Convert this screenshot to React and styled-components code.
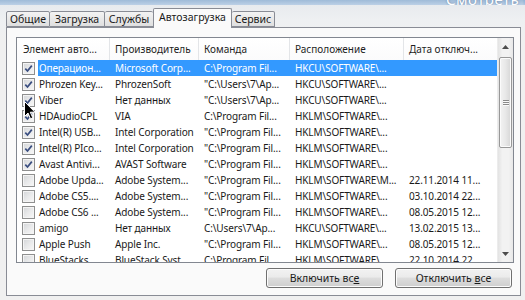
import React from "react";
import styled, { createGlobalStyle } from "styled-components";

const Global = createGlobalStyle`
  html, body { margin: 0; padding: 0; background: #f0f0f0; }
  body { font-family: "Noto Sans", "Open Sans", sans-serif; font-size: 10px; color: #1a1a1a; }
  * { box-sizing: border-box; }
`;

const Window = styled.div`
  position: relative;
  width: 525px;
  height: 300px;
  overflow: hidden;
  display: flex;
  flex-direction: column;
  background: linear-gradient(#e6e9ed 0px, #eef0f2 20px, #f0f0f0 40px);
`;

const TitleStrip = styled.div`
  height: 5px;
  flex: none;
  display: flex;
  align-items: flex-end;
  overflow: hidden;
  padding-left: 446px;
  background: linear-gradient(#9fbbd8, #bcd0e6);
`;

const TitleText = styled.span`
  font-size: 15px;
  line-height: 15px;
  margin-bottom: -2px;
  color: #fff;
  white-space: nowrap;
  letter-spacing: 0.5px;
  text-shadow: 0 0 2px rgba(40, 70, 110, 0.6);
`;

const TabBar = styled.div`
  flex: none;
  height: 23px;
  margin-bottom: -1px;
  padding-left: 6px;
  display: flex;
  align-items: flex-end;
  position: relative;
  z-index: 1;
`;

const Tab = styled.div`
  width: ${(p) => p.$w}px;
  height: ${(p) => (p.$active ? 20 : 16)}px;
  margin-bottom: ${(p) => (p.$active ? 0 : 1)}px;
  display: flex;
  align-items: center;
  justify-content: center;
  padding-bottom: ${(p) => (p.$active ? 3 : 1)}px;
  border: 1px solid #898c95;
  border-bottom: ${(p) => (p.$active ? "none" : "1px solid #898c95")};
  border-left-width: ${(p) => (p.$first || p.$active ? 1 : 0)}px;
  border-right-width: ${(p) => (p.$beforeActive ? 0 : 1)}px;
  border-radius: 2px 2px 0 0;
  background: ${(p) =>
    p.$active ? "#fafafa" : "linear-gradient(#f3f3f3, #e9e9e9 50%, #dfdfdf)"};
  font-size: 10.5px;
  color: #1a1a1a;
  white-space: nowrap;
`;

const Panel = styled.div`
  margin: 0 4px 0 6px;
  border: 1px solid #898c95;
  background: #fafafa;
  padding: 9px 6px 7px 9px;
  display: flex;
  flex-direction: column;
`;

const ListBox = styled.div`
  height: 226px;
  border: 1px solid #828790;
  background: #fff;
  display: flex;
  overflow: hidden;
`;

const ListArea = styled.div`
  width: 480px;
  display: flex;
  flex-direction: column;
  overflow: hidden;
`;

const COLS = "72px 89px 91px 114px 93px";

const Header = styled.div`
  flex: none;
  height: 22px;
  display: grid;
  grid-template-columns: 93px 89px 91px 114px 93px;
  background: linear-gradient(#ffffff, #fbfbfc);
`;

const HeadCell = styled.div`
  display: flex;
  align-items: center;
  padding-left: ${(p) => (p.$first ? 6 : 5)}px;
  border-right: ${(p) => (p.$last ? "none" : "1px solid #e3e5e8")};
  color: #1e1e1e;
  white-space: nowrap;
  overflow: hidden;
`;

const Row = styled.div`
  flex: none;
  height: 16px;
  display: grid;
  grid-template-columns: 21px 1fr;
`;

const CheckCell = styled.div`
  display: flex;
  align-items: center;
  padding-left: 5px;
`;

const Cells = styled.div`
  display: grid;
  grid-template-columns: ${COLS};
  align-items: center;
  background: ${(p) => (p.$selected ? "#3399ff" : "transparent")};
  color: ${(p) => (p.$selected ? "#ffffff" : "#1a1a1a")};
`;

const Cell = styled.div`
  padding-left: ${(p) => (p.$first ? 1 : 5)}px;
  white-space: nowrap;
  overflow: hidden;
  line-height: 16px;
  letter-spacing: -0.12px;
`;

const Box = styled.span`
  width: 13px;
  height: 13px;
  display: inline-flex;
  align-items: center;
  justify-content: center;
  border: 1px solid #8e8f8f;
  box-shadow: inset 0 0 0 1px #f4f4f4;
  background: linear-gradient(135deg, #d3d5d8 0%, #e8e9ea 50%, #f8f8f8 100%);
`;

const ScrollBar = styled.div`
  width: 16px;
  flex: none;
  display: flex;
  flex-direction: column;
  background: linear-gradient(90deg, #e3e3e3, #f2f2f2 30%, #f2f2f2 70%, #e8e8e8);
  border-left: 1px solid #ececec;
`;

const Arrow = styled.div`
  height: 17px;
  flex: none;
  display: flex;
  align-items: center;
  justify-content: center;
`;

const Track = styled.div`
  flex: 1;
  display: flex;
  flex-direction: column;
  padding: 2px 1px;
`;

const Thumb = styled.div`
  height: 91px;
  border: 1px solid #989898;
  border-radius: 2px;
  background: linear-gradient(90deg, #f3f3f3, #e8e8e8 50%, #d6d6d6);
  box-shadow: inset 0 0 0 1px #fbfbfb;
  display: flex;
  flex-direction: column;
  align-items: center;
  justify-content: center;
  gap: 1px;
`;

const Grip = styled.span`
  width: 6px;
  height: 1px;
  background: #8a8a8a;
  box-shadow: 0 1px 0 #fafafa;
`;

const ButtonRow = styled.div`
  margin-top: 5px;
  padding-right: 2px;
  display: flex;
  justify-content: flex-end;
  gap: 12px;
`;

const Button = styled.div`
  width: 117px;
  height: 20px;
  display: flex;
  align-items: center;
  justify-content: center;
  border: 1px solid #707070;
  border-radius: 3px;
  background: linear-gradient(#f2f2f2 0%, #ebebeb 45%, #dddddd 50%, #cfcfcf 100%);
  box-shadow: inset 0 0 0 1px #fcfcfc;
  font-size: 10.5px;
  color: #1a1a1a;
`;

const Cursor = styled.svg`
  position: absolute;
  left: 24px;
  top: 101px;
  z-index: 5;
`;

const Check = ({ on }) => (
  <Box>
    {on && (
      <svg width="9" height="9" viewBox="0 0 9 9">
        <path d="M1.3 4.6 L3.5 7 L7.8 1.6" fill="none" stroke="#3a4e80" strokeWidth="1.7" />
      </svg>
    )}
  </Box>
);

const tabs = [
  { label: "Общие", w: 44 },
  { label: "Загрузка", w: 55 },
  { label: "Службы", w: 48 },
  { label: "Автозагрузка", w: 79, active: true },
  { label: "Сервис", w: 43 },
];

const rows = [
  [true, "Операцион...", "Microsoft Corp...", "C:\\Program Fil...", "HKCU\\SOFTWARE\\...", "", true],
  [true, "Phrozen Key...", "PhrozenSoft", "\"C:\\Users\\7\\Ap...", "HKCU\\SOFTWARE\\...", ""],
  [true, "Viber", "Нет данных", "\"C:\\Users\\7\\Ap...", "HKCU\\SOFTWARE\\...", ""],
  [true, "HDAudioCPL", "VIA", "C:\\Program Fil...", "HKLM\\SOFTWARE\\...", ""],
  [true, "Intel(R) USB...", "Intel Corporation", "\"C:\\Program Fil...", "HKLM\\SOFTWARE\\...", ""],
  [true, "Intel(R) PIco...", "Intel Corporation", "\"C:\\Program Fil...", "HKLM\\SOFTWARE\\...", ""],
  [true, "Avast Antivi...", "AVAST Software", "\"C:\\Program Fil...", "HKLM\\SOFTWARE\\...", ""],
  [false, "Adobe Upda...", "Adobe System...", "\"C:\\Program Fil...", "HKLM\\SOFTWARE\\M...", "22.11.2014 11..."],
  [false, "Adobe CS5....", "Adobe System...", "\"C:\\Program Fil...", "HKLM\\SOFTWARE\\...", "03.10.2014 22..."],
  [false, "Adobe CS6 ...", "Adobe System...", "\"C:\\Program Fil...", "HKLM\\SOFTWARE\\...", "08.05.2015 12..."],
  [false, "amigo", "Нет данных", "C:\\Users\\7\\Ap...", "HKCU\\SOFTWARE\\...", "13.02.2015 13..."],
  [false, "Apple Push", "Apple Inc.", "\"C:\\Program Fil...", "HKLM\\SOFTWARE\\...", "08.05.2015 12..."],
  [false, "BlueStacks...", "BlueStack Syst...", "C:\\Program Fil...", "HKLM\\SOFTWARE\\...", "22.10.2014 22..."],
];

const headers = ["Элемент авто...", "Производитель", "Команда", "Расположение", "Дата отключ..."];

export default function App() {
  return (
    <>
      <Global />
      <Window>
        <TitleStrip>
          <TitleText>Смотреть позже</TitleText>
        </TitleStrip>
        <TabBar>
          {tabs.map((t, i) => (
            <Tab
              key={t.label}
              $w={t.w}
              $active={t.active}
              $first={i === 0}
              $beforeActive={tabs[i + 1] && tabs[i + 1].active}
            >
              {t.label}
            </Tab>
          ))}
        </TabBar>
        <Panel>
          <ListBox>
            <ListArea>
              <Header>
                {headers.map((h, i) => (
                  <HeadCell key={h} $first={i === 0} $last={i === headers.length - 1}>
                    {h}
                  </HeadCell>
                ))}
              </Header>
              {rows.map((r, i) => (
                <Row key={i}>
                  <CheckCell>
                    <Check on={r[0]} />
                  </CheckCell>
                  <Cells $selected={r[6]}>
                    {r.slice(1, 6).map((c, j) => (
                      <Cell key={j} $first={j === 0}>
                        {c}
                      </Cell>
                    ))}
                  </Cells>
                </Row>
              ))}
            </ListArea>
            <ScrollBar>
              <Arrow>
                <svg width="7" height="4" viewBox="0 0 7 4">
                  <path d="M0 4 L3.5 0 L7 4 Z" fill="#4d4d4d" />
                </svg>
              </Arrow>
              <Track>
                <Thumb>
                  <Grip />
                  <Grip />
                  <Grip />
                </Thumb>
              </Track>
              <Arrow>
                <svg width="7" height="4" viewBox="0 0 7 4">
                  <path d="M0 0 L3.5 4 L7 0 Z" fill="#4d4d4d" />
                </svg>
              </Arrow>
            </ScrollBar>
          </ListBox>
          <ButtonRow>
            <Button>
              <span>
                Включить вс<u>е</u>
              </span>
            </Button>
            <Button>
              <span>
                Отключить <u>в</u>се
              </span>
            </Button>
          </ButtonRow>
        </Panel>
        <Cursor width="12" height="19" viewBox="0 0 12 19">
          <path
            d="M0.5 0.5 L0.5 15.5 L4 12 L6.5 17.8 L8.8 16.8 L6.3 11.2 L11 11.2 Z"
            fill="#000"
            stroke="#fff"
            strokeWidth="1"
          />
        </Cursor>
      </Window>
    </>
  );
}
